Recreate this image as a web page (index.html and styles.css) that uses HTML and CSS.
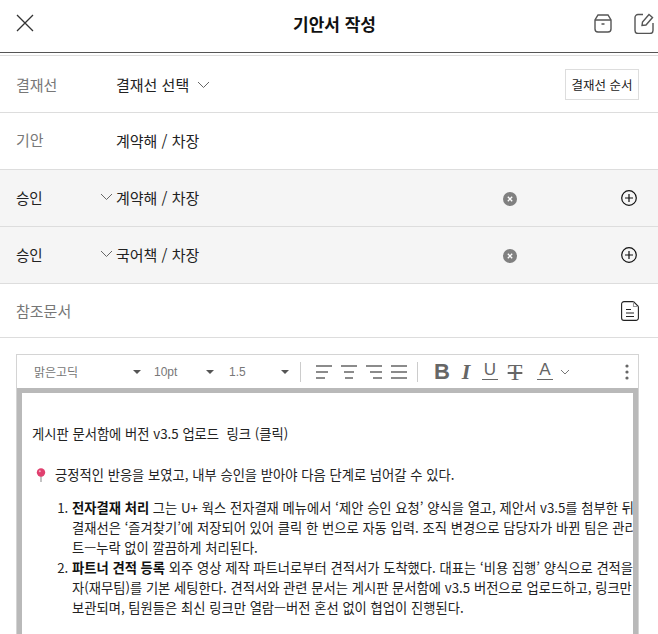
FILE: index.html
```html
<!DOCTYPE html>
<html lang="ko">
<head>
  <meta charset="UTF-8" />
  <meta name="viewport" content="width=device-width, initial-scale=1.0"/>
  <title>기안서 작성</title>
  <link rel="stylesheet" href="styles.css">
</head>
<body>

  <!-- Header -->
  <header class="top-bar">
    <svg class="close-icon" width="20" height="20" viewBox="0 0 20 20"><path d="M2 2L18 18M18 2L2 18" fill="none" stroke="#333" stroke-width="1.3"/></svg>
    <h1 class="page-title">기안서 작성</h1>
    <div class="top-actions">
      <svg width="18" height="19" viewBox="0 0 18 19" fill="none" stroke="#555" stroke-width="1.4"><path d="M4 1H14L17 6V15a3 3 0 0 1-3 3H4a3 3 0 0 1-3-3V6Z"/><path d="M1 6H17M7.5 10H10.5"/></svg>
      <svg width="20" height="21" viewBox="0 0 20 21" fill="none" stroke="#555" stroke-width="1.4"><path d="M9 1.5H4a3 3 0 0 0-3 3v13a3 3 0 0 0 3 3h12a3 3 0 0 0 3-3V10"/><path d="M8 12.5L8.5 9L15 1.5L18.5 4.5L12 12Z"/></svg>
    </div>
  </header>
  <div class="top-gap"></div>

  <!-- Form rows -->
  <section class="row">
    <div class="row-label">결재선</div>
    <div class="row-value">결재선 선택
      <svg class="chevron-gap" width="13" height="8" viewBox="0 0 13 8"><path d="M1 1L6.5 6.5L12 1" fill="none" stroke="#666" stroke-width="1"/></svg>
    </div>
    <button class="order-btn">결재선 순서</button>
  </section>

  <section class="row">
    <div class="row-label row-label-up">기안</div>
    <div class="row-value row-value-up">계약해 / 차장</div>
  </section>

  <section class="row row-grey">
    <div class="row-label row-label-dark">승인</div>
    <svg class="row-chevron" width="13" height="8" viewBox="0 0 13 8"><path d="M1 1L6.5 6.5L12 1" fill="none" stroke="#666" stroke-width="1"/></svg>
    <div class="row-value row-value-up">계약해 / 차장</div>
    <svg class="remove-icon" width="14" height="14" viewBox="0 0 14 14"><circle cx="7" cy="7" r="7" fill="#808080"/><path d="M4.8 4.8L9.2 9.2M9.2 4.8L4.8 9.2" stroke="#fff" stroke-width="1.3"/></svg>
    <svg class="add-icon" width="16" height="16" viewBox="0 0 16 16" fill="none" stroke="#111" stroke-width="1.2"><circle cx="8" cy="8" r="7.3"/><path d="M8 4V12M4 8H12"/></svg>
  </section>

  <section class="row row-grey">
    <div class="row-label row-label-dark">승인</div>
    <svg class="row-chevron" width="13" height="8" viewBox="0 0 13 8"><path d="M1 1L6.5 6.5L12 1" fill="none" stroke="#666" stroke-width="1"/></svg>
    <div class="row-value row-value-up">국어책 / 차장</div>
    <svg class="remove-icon" width="14" height="14" viewBox="0 0 14 14"><circle cx="7" cy="7" r="7" fill="#808080"/><path d="M4.8 4.8L9.2 9.2M9.2 4.8L4.8 9.2" stroke="#fff" stroke-width="1.3"/></svg>
    <svg class="add-icon" width="16" height="16" viewBox="0 0 16 16" fill="none" stroke="#111" stroke-width="1.2"><circle cx="8" cy="8" r="7.3"/><path d="M8 4V12M4 8H12"/></svg>
  </section>

  <section class="row row-ref">
    <div class="row-label row-label-fill">참조문서</div>
    <svg class="doc-icon" width="18" height="20" viewBox="0 0 18 20" fill="none" stroke="#222" stroke-width="1.1"><path d="M3 .6H12.5L17.4 5.5V17a2.4 2.4 0 0 1-2.4 2.4H3A2.4 2.4 0 0 1 .6 17V3A2.4 2.4 0 0 1 3 .6Z"/><path d="M12.5 .6V5.5H17.4" stroke="#999"/><path d="M5 8.5H10M5 12H13M5 15.5H13"/></svg>
  </section>

  <!-- Editor -->
  <div class="editor">
    <div class="toolbar">
      <span class="tool-select tool-font">맑은고딕<i class="caret"></i></span>
      <span class="tool-select tool-size">10pt<i class="caret"></i></span>
      <span class="tool-select tool-line">1.5<i class="caret"></i></span>
      <span class="tool-sep"></span>
      <div class="tool-group">
        <svg width="16" height="14" viewBox="0 0 16 14" stroke="#666" stroke-width="1.5"><path d="M0 1H16M0 7H12M0 13H9"/></svg>
        <svg width="16" height="14" viewBox="0 0 16 14" stroke="#666" stroke-width="1.5"><path d="M0 1H16M3 7H13M4 13H12"/></svg>
        <svg width="16" height="14" viewBox="0 0 16 14" stroke="#666" stroke-width="1.5"><path d="M0 1H16M4 7H16M7 13H16"/></svg>
        <svg width="16" height="14" viewBox="0 0 16 14" stroke="#666" stroke-width="1.5"><path d="M0 1H16M0 7H16M0 13H16"/></svg>
      </div>
      <span class="tool-sep tool-sep-2"></span>
      <div class="tool-format">
        <span class="fmt fmt-b">B</span>
        <span class="fmt fmt-i">I</span>
        <span class="fmt fmt-u">U</span>
        <span class="fmt fmt-s">T</span>
        <span class="fmt fmt-a">A</span>
        <svg width="10" height="6" viewBox="0 0 10 6"><path d="M1 1L5 5L9 1" fill="none" stroke="#777" stroke-width="1"/></svg>
      </div>
      <svg class="tool-more" width="4" height="16" viewBox="0 0 4 16" fill="#666"><circle cx="2" cy="2" r="1.6"/><circle cx="2" cy="8" r="1.6"/><circle cx="2" cy="14" r="1.6"/></svg>
    </div>

    <div class="editor-frame">
      <div class="editor-body">
        <p class="doc-title">게시판 문서함에 버전 v3.5 업로드&nbsp; 링크 (클릭)</p>
        <p class="doc-lead">
          <svg width="10" height="14" viewBox="0 0 10 14"><path d="M5 7V14" stroke="#b5b5b5" stroke-width="1.6"/><circle cx="5" cy="4.5" r="4.2" fill="#e0406f"/><circle cx="3.8" cy="3.2" r="1" fill="#f7a6c0"/></svg>
          긍정적인 반응을 보였고, 내부 승인을 받아야 다음 단계로 넘어갈 수 있다.
        </p>
        <ol class="doc-list">
          <li>
            <span class="doc-line"><b>전자결재 처리</b> 그는 U+ 웍스 전자결재 메뉴에서 ‘제안 승인 요청’ 양식을 열고, 제안서 v3.5를 첨부한 뒤</span>
            <span class="doc-line">결재선은 ‘즐겨찾기’에 저장되어 있어 클릭 한 번으로 자동 입력. 조직 변경으로 담당자가 바뀐 팀은 관리</span>
            <span class="doc-line">트—누락 없이 깔끔하게 처리된다.</span>
          </li>
          <li>
            <span class="doc-line"><b>파트너 견적 등록</b> 외주 영상 제작 파트너로부터 견적서가 도착했다. 대표는 ‘비용 집행’ 양식으로 견적을</span>
            <span class="doc-line">자(재무팀)를 기본 세팅한다. 견적서와 관련 문서는 게시판 문서함에 v3.5 버전으로 업로드하고, 링크만</span>
            <span class="doc-line">보관되며, 팀원들은 최신 링크만 열람—버전 혼선 없이 협업이 진행된다.</span>
          </li>
        </ol>
      </div>
    </div>
  </div>

</body>
</html>
```

FILE: styles.css
```css
html, body {
  height: 634px;
  overflow: hidden;
}

body {
  margin: 0;
  padding: 0;
  background: #fff;
  color: #222;
  font-family: "Noto Sans CJK KR", "Noto Sans", sans-serif;
  font-size: 15px;
}

/* Header */
.top-bar {
  display: flex;
  align-items: center;
  height: 46px;
  padding: 0 4px 6px 15px;
  border-bottom: 1px solid #555;
}

.page-title {
  flex: 1;
  margin: 0 0 0 40px;
  text-align: center;
  font-size: 17px;
  font-weight: 700;
  color: #111;
}

.top-actions {
  display: flex;
  align-items: center;
  gap: 22px;
}

.top-gap {
  height: 2px;
  border-bottom: 1px solid #ddd;
}

/* Rows */
.row {
  display: flex;
  align-items: center;
  height: 56px;
  padding: 0 19px 0 16px;
  border-bottom: 1px solid #ddd;
}

.row-grey {
  background: #f5f5f5;
}

.row-ref {
  height: 53px;
}

.row-label {
  width: 100px;
  color: #777;
  flex-shrink: 0;
}

.row-label-up {
  padding-bottom: 4px;
}

.row-label-dark {
  width: 84px;
  padding-bottom: 2px;
  color: #222;
  font-size: 14.5px;
}

.row-label-fill {
  flex: 1;
}

.row-value {
  flex: 1;
  color: #222;
}

.row-value-up {
  padding-bottom: 2px;
}

.chevron-gap {
  margin-left: 4px;
  vertical-align: 2px;
}

.row-chevron {
  margin-right: 3px;
  margin-top: -3px;
}

.order-btn {
  width: 74px;
  height: 31px;
  padding: 0;
  background: #fff;
  border: 1px solid #ddd;
  color: #222;
  font-family: inherit;
  font-size: 12.5px;
}

.remove-icon {
  margin-right: 104px;
  margin-top: 2px;
}

.add-icon {
  margin-right: 2px;
}

/* Editor */
.editor {
  margin: 16px 19px 0 16px;
  border: 1px solid #d4d4d4;
  border-bottom: none;
}

.toolbar {
  display: flex;
  align-items: center;
  height: 33px;
  background: #fff;
}

.tool-select {
  display: flex;
  align-items: center;
  justify-content: space-between;
  color: #777;
  font-size: 12px;
}

.tool-font {
  width: 107px;
  margin-left: 17px;
}

.tool-size {
  width: 60px;
  margin-left: 13px;
  font-family: "Liberation Sans", sans-serif;
}

.tool-line {
  width: 60px;
  margin-left: 15px;
  font-family: "Liberation Sans", sans-serif;
}

.caret {
  width: 0;
  height: 0;
  border-left: 4px solid transparent;
  border-right: 4px solid transparent;
  border-top: 4px solid #555;
}

.tool-sep {
  width: 1px;
  height: 20px;
  margin-left: 11px;
  background: #ccc;
}

.tool-sep-2 {
  margin-left: 10px;
}

.tool-group {
  display: flex;
  align-items: center;
  gap: 9px;
  margin-left: 15px;
}

.tool-format {
  display: flex;
  align-items: center;
  margin-left: 16px;
}

.fmt {
  display: inline-block;
  color: #666;
  font-family: "Liberation Sans", sans-serif;
  text-align: center;
}

.fmt-b {
  width: 14px;
  font-size: 22px;
  font-weight: 700;
  line-height: 22px;
}

.fmt-i {
  width: 16px;
  margin-left: 10px;
  font-family: "Liberation Serif", serif;
  font-size: 22px;
  font-style: italic;
  font-weight: 700;
  line-height: 22px;
}

.fmt-u {
  width: 16px;
  height: 16px;
  margin-left: 8px;
  border-bottom: 1.5px solid #666;
  font-size: 17px;
  line-height: 14px;
}

.fmt-s {
  width: 16px;
  margin-left: 9px;
  font-family: "Liberation Serif", serif;
  font-size: 24px;
  line-height: 22px;
  text-decoration: line-through;
  text-decoration-thickness: 1.5px;
}

.fmt-a {
  width: 16px;
  height: 16px;
  margin-left: 14px;
  margin-right: 7px;
  border-bottom: 1.5px solid #666;
  font-size: 17px;
  line-height: 14px;
}

.tool-more {
  margin-left: auto;
  margin-right: 9px;
}

.editor-frame {
  height: 300px;
  border: 5px solid #b9b9b9;
  border-bottom: none;
  overflow: hidden;
}

.editor-body {
  padding: 31px 0 0 10px;
  color: #222;
  font-size: 13.3px;
  line-height: 20px;
  white-space: nowrap;
}

.doc-title {
  margin: 0 0 21px;
}

.doc-lead {
  display: flex;
  align-items: center;
  gap: 9px;
  margin: 0 0 13px;
  padding-left: 4px;
}

.doc-list {
  margin: 0;
  padding-left: 40px;
}

.doc-line {
  display: block;
}

.doc-list b {
  color: #111;
}
```
